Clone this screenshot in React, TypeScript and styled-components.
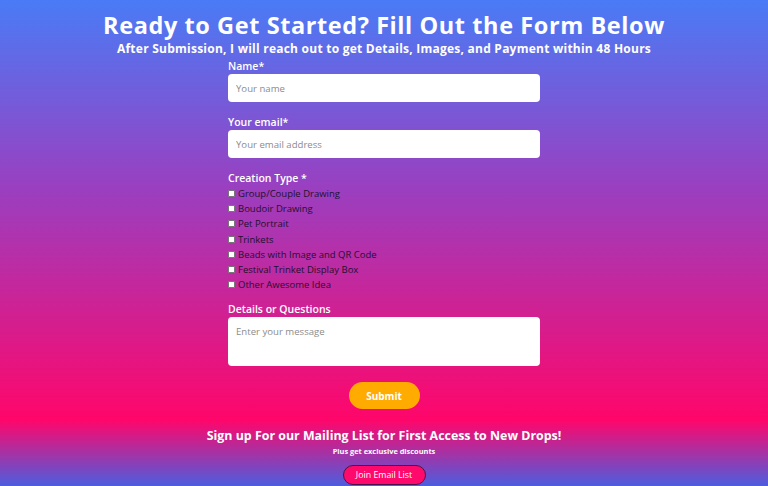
import React from 'react';
import styled, { createGlobalStyle } from 'styled-components';

const GlobalStyle = createGlobalStyle`
  html, body {
    margin: 0;
    padding: 0;
  }
  body {
    font-family: 'Open Sans', 'Liberation Sans', sans-serif;
    background: #4a5fe0;
  }
`;

const Page = styled.div`
  display: flex;
  flex-direction: column;
  width: 100%;
  min-height: 486px;
`;

const FormSection = styled.section`
  background: linear-gradient(to bottom, #4a7bf6 0%, #9a3fc0 45%, #ff066a 100%);
  padding: 10px 0 11px;
  display: flex;
  flex-direction: column;
  align-items: center;
`;

const Title = styled.h1`
  margin: 0;
  color: #fff;
  font-size: 23.5px;
  letter-spacing: 0.58px;
  line-height: 30px;
  font-weight: 700;
  text-align: center;
`;

const Subtitle = styled.h2`
  margin: 1px 0 0;
  color: #fff;
  font-size: 12px;
  letter-spacing: 0.24px;
  line-height: 16px;
  font-weight: 700;
  text-align: center;
`;

const Form = styled.form`
  width: 312px;
  margin-top: 1px;
  display: flex;
  flex-direction: column;
`;

const Field = styled.div<{ $gap?: number }>`
  display: flex;
  flex-direction: column;
  margin-bottom: ${props => props.$gap ?? 12}px;
`;

const Label = styled.label`
  color: #fff;
  font-size: 10.5px;
  line-height: 16px;
  font-weight: 600;
`;

const TextInput = styled.input`
  box-sizing: border-box;
  height: 28px;
  width: 100%;
  border: none;
  border-radius: 4px;
  padding: 0 8px;
  font-family: inherit;
  font-size: 9.6px;
  background: #fff;
  outline: none;

  &::placeholder {
    color: #8c8c8c;
  }
`;

const TextArea = styled.textarea`
  box-sizing: border-box;
  height: 49px;
  width: 100%;
  border: none;
  border-radius: 4px;
  padding: 8px;
  font-family: inherit;
  font-size: 9.6px;
  background: #fff;
  resize: none;
  outline: none;

  &::placeholder {
    color: #8c8c8c;
  }
`;

const Options = styled.div`
  display: flex;
  flex-direction: column;
`;

const OptionRow = styled.label`
  display: flex;
  align-items: center;
  gap: 3px;
  height: 15.2px;
  color: #24102f;
  font-size: 9.5px;
  font-weight: 500;
`;

const Box = styled.input`
  width: 7px;
  height: 7px;
  margin: 0;
  appearance: none;
  background: #fff;
  border: 0.5px solid #777;
  border-radius: 1px;
  box-sizing: border-box;
`;

const SubmitRow = styled.div`
  display: flex;
  justify-content: center;
  margin-top: 4px;
`;

const SubmitButton = styled.button`
  width: 71px;
  height: 27px;
  border: none;
  border-radius: 14px;
  background: #ffab00;
  color: #fff;
  font-family: inherit;
  font-size: 10px;
  font-weight: 700;
  cursor: pointer;
`;

const MailingSection = styled.section`
  flex: 1;
  background: linear-gradient(to bottom, #ff066a 0%, #4a5fe0 100%);
  padding: 6px 0 2px;
  display: flex;
  flex-direction: column;
  align-items: center;
`;

const MailingTitle = styled.h3`
  margin: 0;
  color: #fff;
  font-size: 12.4px;
  line-height: 20px;
  font-weight: 700;
`;

const MailingNote = styled.p`
  margin: 0 0 9px;
  color: #fff;
  font-size: 7.4px;
  line-height: 10px;
  font-weight: 700;
`;

const JoinButton = styled.button`
  width: 83px;
  height: 20px;
  border: 1px solid #4a1545;
  border-radius: 10px;
  background: #ff0a6c;
  color: #fff;
  font-family: inherit;
  font-size: 8.8px;
  font-weight: 500;
  padding: 0;
  cursor: pointer;
`;

const creationTypes = [
  'Group/Couple Drawing',
  'Boudoir Drawing',
  'Pet Portrait',
  'Trinkets',
  'Beads with Image and QR Code',
  'Festival Trinket Display Box',
  'Other Awesome Idea',
];

const App: React.FC = () => {
  return (
    <Page>
      <GlobalStyle />
      <FormSection>
        <Title>Ready to Get Started? Fill Out the Form Below</Title>
        <Subtitle>After Submission, I will reach out to get Details, Images, and Payment within 48 Hours</Subtitle>
        <Form onSubmit={e => e.preventDefault()}>
          <Field>
            <Label htmlFor="name">Name*</Label>
            <TextInput id="name" type="text" placeholder="Your name" />
          </Field>
          <Field>
            <Label htmlFor="email">Your email*</Label>
            <TextInput id="email" type="email" placeholder="Your email address" />
          </Field>
          <Field $gap={9}>
            <Label as="span">Creation Type *</Label>
            <Options>
              {creationTypes.map(type => (
                <OptionRow key={type}>
                  <Box type="checkbox" />
                  {type}
                </OptionRow>
              ))}
            </Options>
          </Field>
          <Field>
            <Label htmlFor="details">Details or Questions</Label>
            <TextArea id="details" placeholder="Enter your message" />
          </Field>
          <SubmitRow>
            <SubmitButton type="submit">Submit</SubmitButton>
          </SubmitRow>
        </Form>
      </FormSection>
      <MailingSection>
        <MailingTitle>Sign up For our Mailing List for First Access to New Drops!</MailingTitle>
        <MailingNote>Plus get exclusive discounts</MailingNote>
        <JoinButton type="button">Join Email List</JoinButton>
      </MailingSection>
    </Page>
  );
};

export default App;
